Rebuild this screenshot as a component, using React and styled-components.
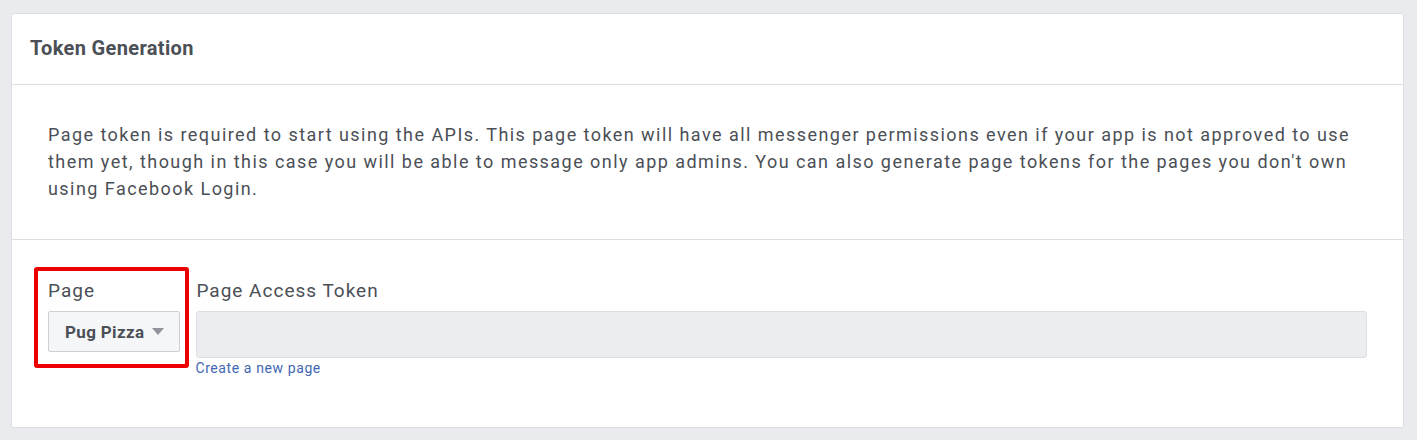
import React from "react";
import styled, { createGlobalStyle } from "styled-components";

const Global = createGlobalStyle`
  html, body { margin: 0; padding: 0; background: #e9ebee; }
  body { font-family: Roboto, "Liberation Sans", Arial, sans-serif; }
  * { box-sizing: border-box; }
`;

const Page = styled.div`
  padding: 13px 13px 12px 11px;
  width: 1417px;
`;

const Card = styled.section`
  background: #fff;
  border: 1px solid #dddfe2;
  border-radius: 3px;
  width: 1393px;
`;

const Header = styled.header`
  height: 71px;
  display: flex;
  align-items: center;
  padding: 0 18px 3px;
  border-bottom: 1px solid #dddfe2;
`;

const Title = styled.h2`
  margin: 0;
  font-size: 20px;
  font-weight: 700;
  letter-spacing: 0.35px;
  color: #4b4f56;
`;

const Section = styled.div`
  padding: ${(p) => p.$pad};
  border-bottom: ${(p) => (p.$last ? "none" : "1px solid #dddfe2")};
`;

const Text = styled.p`
  margin: 0;
  font-size: 18px;
  line-height: 27px;
  letter-spacing: 1.45px;
  color: #4b4f56;
`;

const Row = styled.div`
  display: flex;
  align-items: flex-start;
  gap: 16px;
`;

const Field = styled.div`
  position: relative;
  display: flex;
  flex-direction: column;
  flex: ${(p) => (p.$grow ? "1" : "none")};
`;

const Highlight = styled.div`
  position: absolute;
  left: -14px;
  right: -9px;
  top: -13px;
  bottom: -16px;
  border: 4px solid #ee0000;
  border-radius: 3px;
  pointer-events: none;
`;

const Label = styled.label`
  font-size: 19px;
  line-height: 22px;
  letter-spacing: 1px;
  color: #4b4f56;
  margin-bottom: 9px;
`;

const Select = styled.button`
  display: flex;
  align-items: center;
  gap: 8px;
  height: 41px;
  padding: 0 15px 0 16px;
  background: #f5f6f7;
  border: 1px solid #ccd0d5;
  border-radius: 2px;
  font-family: inherit;
  font-size: 17px;
  font-weight: 700;
  letter-spacing: 0.35px;
  color: #4b4f56;
`;

const Caret = styled.span`
  width: 0;
  height: 0;
  border-left: 6px solid transparent;
  border-right: 6px solid transparent;
  border-top: 7px solid #90949c;
`;

const Input = styled.div`
  height: 47px;
  background: #ebedf0;
  border: 1px solid #dddfe2;
  border-radius: 3px;
`;

const Link = styled.a`
  font-size: 14px;
  line-height: 18px;
  letter-spacing: 0.6px;
  color: #4267b2;
  text-decoration: none;
  margin-left: -1px;
  margin-top: 1px;
`;

export default function App() {
  return (
    <>
      <Global />
      <Page>
        <Card>
          <Header>
            <Title>Token Generation</Title>
          </Header>
          <Section $pad="36px 36px 37px 36px">
            <Text>
              Page token is required to start using the APIs. This page token will have all messenger permissions even if your app is not approved to use them yet, though in this case you will be able to message only app admins. You can also generate page tokens for the pages you don't own using Facebook Login.
            </Text>
          </Section>
          <Section $last $pad="40px 36px 50px 36px">
            <Row>
              <Field>
                <Highlight />
                <Label>Page</Label>
                <Select>
                  Pug Pizza
                  <Caret />
                </Select>
              </Field>
              <Field $grow>
                <Label>Page Access Token</Label>
                <Input />
                <Link href="#">Create a new page</Link>
              </Field>
            </Row>
          </Section>
        </Card>
      </Page>
    </>
  );
}
